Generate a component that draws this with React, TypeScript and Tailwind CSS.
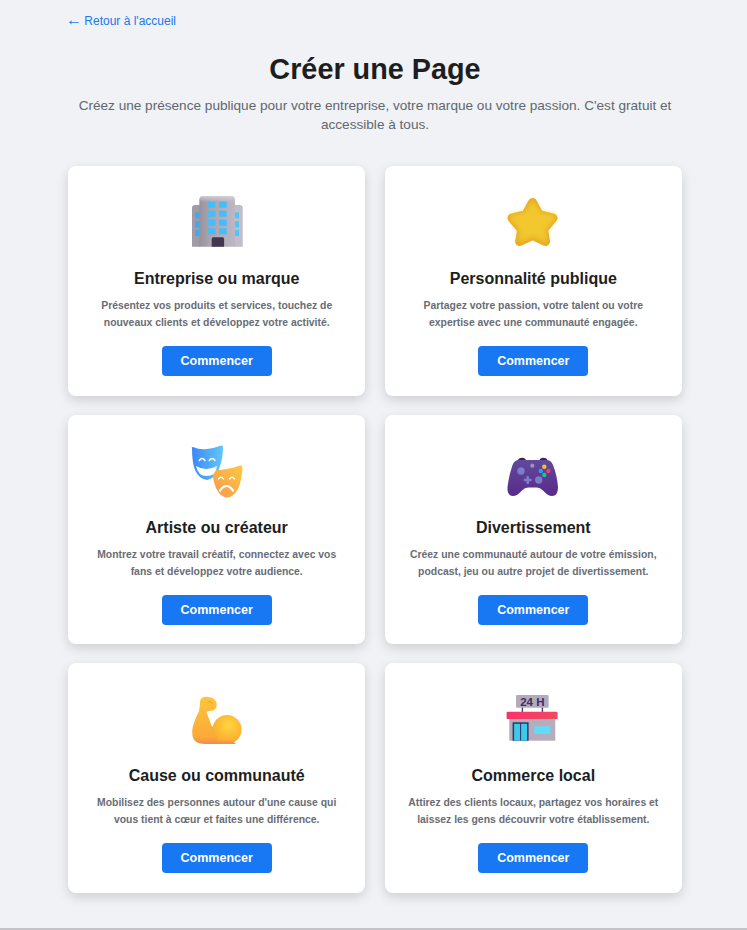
import type { ReactNode } from "react";

// each icon sits in a 52x52 box, coords are px inside that box
const Icon = ({ children }: { children: ReactNode }) => (
  <svg width="52" height="52" viewBox="0 0 52 52" className="overflow-visible">
    {children}
  </svg>
);

const BuildingIcon = () => (
  <Icon>
    <defs>
      <linearGradient id="bldg" x1="0" x2="1" y1="0" y2="0">
        <stop offset="0" stopColor="#96919c" />
        <stop offset="0.3" stopColor="#aaa5af" />
        <stop offset="1" stopColor="#bdb7c3" />
      </linearGradient>
      <linearGradient id="bldgTop" x1="0" x2="0" y1="0" y2="1">
        <stop offset="0" stopColor="#dcd6e0" stopOpacity="0.8" />
        <stop offset="0.12" stopColor="#dcd6e0" stopOpacity="0" />
      </linearGradient>
    </defs>
    <path d="M1 12a3 3 0 0 1 3-3h5v41.700H1z" fill="#a09ba6" />
    <path d="M51.700 12a3 3 0 0 0-3-3H43v41.700h8.700z" fill="#c2bcc8" />
    <path d="M8.300 4a4 4 0 0 1 4-4H40a4 4 0 0 1 4 4v46.700H8.300z" fill="url(#bldg)" />
    <path d="M8.300 4a4 4 0 0 1 4-4H40a4 4 0 0 1 4 4v46.700H8.300z" fill="url(#bldgTop)" />
    {[5.7, 14.7, 23.7, 32.3].map((y) =>
      [16.7, 28].map((x) => <rect key={`${x}-${y}`} x={x} y={y} width="7.800" height="6" fill="#46bdfb" />),
    )}
    {[16.3, 25.3, 34].map((y) => (
      <g key={y}>
        <rect x="4.300" y={y} width="4" height="6" fill="#3fa9ee" />
        <rect x="44" y={y} width="4" height="6" fill="#4cc6fb" />
      </g>
    ))}
    <path d="M20.700 43a1.700 1.700 0 0 1 1.700-1.700h9a1.700 1.700 0 0 1 1.700 1.700v7.700H20.700z" fill="#43364f" />
  </Icon>
);

const StarIcon = () => (
  <Icon>
    <defs>
      <filter id="starBlur" x="-20%" y="-20%" width="140%" height="140%">
        <feGaussianBlur stdDeviation="2.500" />
      </filter>
    </defs>
    <g transform="translate(0 1)">
      <polygon
        points="25.600,5.500 32,17.500 46,21 36.500,32.500 38.500,44.500 25.600,38.500 12.700,44.500 14.700,32.500 5,21 19,17.500"
        fill="#e6ab24"
        stroke="#e6ab24"
        strokeWidth="9"
        strokeLinejoin="round"
      />
      <polygon
        points="25.600,7 32,17.500 46,20 36.500,32.500 37.500,42 25.600,37.500 13.700,42 14.700,32.500 5,20 19,17.500"
        fill="#f2c82f"
        stroke="#f2c82f"
        strokeWidth="5"
        strokeLinejoin="round"
        filter="url(#starBlur)"
      />
    </g>
  </Icon>
);

const MasksIcon = () => (
  <Icon>
    <defs>
      <linearGradient id="blueMask" x1="0" x2="1" y1="0" y2="0">
        <stop offset="0" stopColor="#3b88f6" />
        <stop offset="1" stopColor="#62c6fc" />
      </linearGradient>
      <linearGradient id="orangeMask" x1="0" x2="1" y1="1" y2="0">
        <stop offset="0" stopColor="#f9964d" />
        <stop offset="1" stopColor="#fdc941" />
      </linearGradient>
    </defs>
    <path d="M1 3.500Q0 2 2 2Q9 5 16 4Q24 3 30 .5Q32 0 32 2Q32 14 28 24Q23 34 16 35Q8 34 4 25Q1 17 1 3.500Z" fill="url(#blueMask)" />
    <path d="M21 24Q27 26 35 24Q43 23 49 20.500Q51.500 20 51.500 22Q51 35 47 44Q42 52.500 36 52.500Q29 52 25 43Q22 36 21 24Z" fill="url(#orangeMask)" />
    <path d="M8.300 15.500Q11 11.500 14 15.500M18.300 15.500Q21 11.500 24 15.500" stroke="#fff" strokeWidth="1.500" fill="none" strokeLinecap="round" />
    <path d="M5 21Q15 27 26 21Q25 31 15.500 31Q7 31 5 21Z" fill="#fff" />
    <path d="M27.500 34Q30 30.500 32.500 34M38.500 34Q41 30.500 43.500 34" stroke="#fff" strokeWidth="1.400" fill="none" strokeLinecap="round" />
    <path d="M29 45.500Q35.500 36.500 42 45.500" stroke="#fff" strokeWidth="2.200" fill="none" strokeLinecap="round" />
  </Icon>
);

const GamepadIcon = () => (
  <Icon>
    <defs>
      <linearGradient id="pad" x1="0" x2="0" y1="0" y2="1">
        <stop offset="0" stopColor="#5f4a9c" />
        <stop offset="1" stopColor="#5a2a8a" />
      </linearGradient>
    </defs>
    <path d="M10.600 16q1-3.300 4.500-3.300t4 3.300zM32.300 16q.5-3.300 4-3.300t4.500 3.300z" fill="#4a1d5c" />
    <path
      d="M12 15H39.500Q44 15 46 20Q50 30 51 42Q51 51 45 51Q41 51 36 45.500Q33 42.500 30 42.500H21Q18 42.500 15 45.500Q10 51 6 51Q0 51 .5 42Q2 30 5.500 20Q7.500 15 12 15Z"
      fill="url(#pad)"
    />
    <circle cx="14" cy="26" r="3.700" fill="#7d7bcb" />
    <circle cx="31.700" cy="35" r="3.700" fill="#7d7bcb" />
    <circle cx="25.300" cy="20.700" r="2.100" fill="#9d92b4" />
    <rect x="16.700" y="33.700" width="8" height="2.600" rx="0.800" fill="#7d7bcb" />
    <rect x="19.400" y="31" width="2.600" height="8" rx="0.800" fill="#7d7bcb" />
    <circle cx="37.300" cy="21.700" r="2.200" fill="#fbbf2d" />
    <circle cx="37.300" cy="30" r="2.200" fill="#12c98f" />
    <circle cx="33.800" cy="26" r="2.200" fill="#2f9bf0" />
    <circle cx="41.300" cy="26" r="2.200" fill="#f43b6f" />
  </Icon>
);

const MuscleIcon = () => (
  <Icon>
    <defs>
      <linearGradient id="arm" x1="0" x2="0" y1="0" y2="1">
        <stop offset="0" stopColor="#fdc53e" />
        <stop offset="0.85" stopColor="#fcaa38" />
        <stop offset="1" stopColor="#f08a52" />
      </linearGradient>
      <radialGradient id="bicep" cx="0.55" cy="0.35" r="0.62">
        <stop offset="0" stopColor="#ffd640" />
        <stop offset="1" stopColor="#fcaa2c" />
      </radialGradient>
      <linearGradient id="bicepEdge" x1="0" x2="0" y1="0" y2="1">
        <stop offset="0.85" stopColor="#f08a52" stopOpacity="0" />
        <stop offset="1" stopColor="#f08a52" />
      </linearGradient>
    </defs>
    <path
      d="M9 9Q9 3.700 16 3.700Q25.700 4 25.700 12Q25.500 18 18 18L15.500 19L20.700 33L45 51H14Q3 51 1.500 43Q.5 38 2 33Q4 26 8 18Q9 13 9 9Z"
      fill="url(#arm)"
    />
    <circle cx="36" cy="36.500" r="14.500" fill="url(#bicep)" />
    <circle cx="36" cy="36.500" r="14.500" fill="url(#bicepEdge)" />
    <path d="M17 8.500Q21 8 22 11" stroke="#e8962c" strokeWidth="0.800" fill="none" strokeLinecap="round" />
  </Icon>
);

const StoreIcon = () => (
  <Icon>
    <defs>
      <linearGradient id="awning" x1="0" x2="1" y1="0" y2="0">
        <stop offset="0" stopColor="#f9326d" />
        <stop offset="1" stopColor="#f04a60" />
      </linearGradient>
    </defs>
    <rect x="9" y="2" width="32.600" height="12.700" rx="1" fill="#b3abbb" />
    <rect x="14.700" y="14.700" width="1.400" height="4.500" fill="#4f3f68" />
    <rect x="34.700" y="14.700" width="1.400" height="4.500" fill="#4f3f68" />
    <text x="25.300" y="12.500" textAnchor="middle" fontFamily="'Liberation Sans', sans-serif" fontWeight="700" fontSize="11.500" fill="#3f2d63">
      24 H
    </text>
    <rect x="2.300" y="26" width="46" height="21.700" fill="#b5adbb" />
    <rect x="-0.400" y="18.700" width="51" height="7.300" rx="1" fill="url(#awning)" />
    <rect x="5.600" y="29.300" width="16" height="18.400" fill="#3f2d63" />
    <rect x="7.100" y="30.800" width="6" height="16.900" fill="#38cbec" />
    <rect x="14.100" y="30.800" width="6" height="16.900" fill="#38cbec" />
    <rect x="27.300" y="33.300" width="16" height="7.700" fill="#5edcfb" />
  </Icon>
);

const cards: { icon: ReactNode; title: string; lines: string[] }[] = [
  {
    icon: <BuildingIcon />,
    title: "Entreprise ou marque",
    lines: ["Présentez vos produits et services, touchez de", "nouveaux clients et développez votre activité."],
  },
  {
    icon: <StarIcon />,
    title: "Personnalité publique",
    lines: ["Partagez votre passion, votre talent ou votre", "expertise avec une communauté engagée."],
  },
  {
    icon: <MasksIcon />,
    title: "Artiste ou créateur",
    lines: ["Montrez votre travail créatif, connectez avec vos", "fans et développez votre audience."],
  },
  {
    icon: <GamepadIcon />,
    title: "Divertissement",
    lines: ["Créez une communauté autour de votre émission,", "podcast, jeu ou autre projet de divertissement."],
  },
  {
    icon: <MuscleIcon />,
    title: "Cause ou communauté",
    lines: ["Mobilisez des personnes autour d'une cause qui", "vous tient à cœur et faites une différence."],
  },
  {
    icon: <StoreIcon />,
    title: "Commerce local",
    lines: ["Attirez des clients locaux, partagez vos horaires et", "laissez les gens découvrir votre établissement."],
  },
];

export default function App() {
  return (
    <div className="flex min-h-[930px] flex-col bg-[#f0f2f5] font-['Liberation_Sans',Arial,sans-serif]">
      <div className="ml-[68px] w-[614px] flex-1 pt-[12px]">
        <a href="#" className="block text-[12px] leading-[16px] text-[#1877f2]">
          <span className="-mr-[1px] -ml-[2px] text-[16px] leading-[16px]">←</span> Retour à l'accueil
        </a>
        <h1 className="mt-[20px] text-center text-[28.8px] leading-[40px] font-bold text-[#1c1e21]">Créer une Page</h1>
        <p className="mt-[7px] text-center text-[13.6px] leading-[19px] text-[#606770]">
          Créez une présence publique pour votre entreprise, votre marque ou votre passion. C'est gratuit et
          <br />
          accessible à tous.
        </p>
        <div className="mt-[32px] grid grid-cols-2 gap-x-[19.2px] gap-y-[19px]">
          {cards.map((c) => (
            <div
              key={c.title}
              className="flex h-[229.5px] flex-col items-center rounded-[8px] bg-white pt-[30px] shadow-[0_4px_12px_rgba(0,0,0,0.15)]"
            >
              <div className="h-[52px]">{c.icon}</div>
              <h2 className="mt-[20px] text-[16px] leading-[22px] font-bold text-[#1c1e21]">{c.title}</h2>
              <p className="mt-[7px] text-center text-[10.4px] leading-[17px] font-bold text-[#686d75]">
                {c.lines[0]}
                <br />
                {c.lines[1]}
              </p>
              <button className="mt-[15px] h-[30px] w-[110px] rounded-[4px] bg-[#1877f2] pt-[1px] text-[12.5px] font-bold text-white">
                Commencer
              </button>
            </div>
          ))}
        </div>
      </div>
      <div className="h-[2px] bg-[#c4c4c8]" />
    </div>
  );
}
